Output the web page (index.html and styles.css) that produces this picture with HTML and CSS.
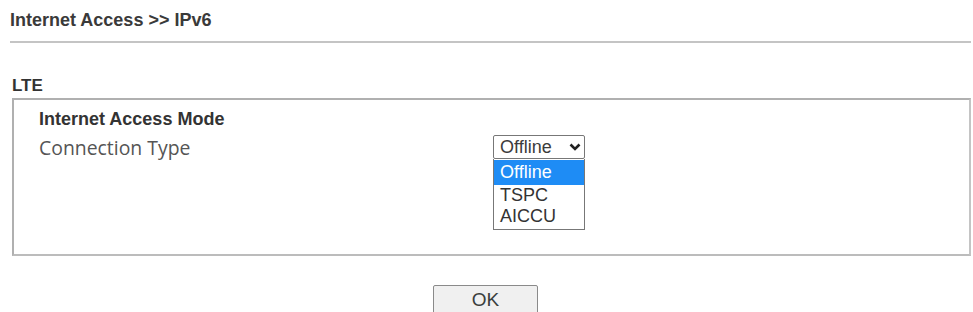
FILE: index.html
```html
<!DOCTYPE html>
<html>
<head>
<meta charset="utf-8">
<link rel="stylesheet" href="styles.css">
</head>
<body>
<div class="page">
  <div class="title">Internet Access &gt;&gt; IPv6</div>
  <div class="rule"></div>
  <div class="section">LTE</div>
  <div class="box">
    <div class="mode">Internet Access Mode</div>
    <div class="row">
      <div class="label">Connection Type</div>
      <div class="control">
        <div class="select">
          <span class="value">Offline</span>
          <svg class="chev" width="12" height="8" viewBox="0 0 12 8"><path d="M1.5 1.5 L6 6 L10.5 1.5" fill="none" stroke="#222" stroke-width="2.6"/></svg>
        </div>
        <div class="list">
          <div class="opt sel">Offline</div>
          <div class="opt">TSPC</div>
          <div class="opt">AICCU</div>
        </div>
      </div>
    </div>
  </div>
  <div class="actions">
    <button class="ok">OK</button>
  </div>
</div>
</body>
</html>
```

FILE: styles.css
```css
html, body {
  margin: 0;
  padding: 0;
  background: #fff;
}
.page {
  padding: 10px 2px 0 10px;
  font-family: "Liberation Sans", Arial, sans-serif;
  color: #333;
}
.title {
  font-weight: bold;
  font-size: 18px;
  line-height: 20px;
  color: #3a3a3a;
}
.rule {
  height: 2px;
  background: #c4c4c4;
  margin-top: 11px;
}
.section {
  font-weight: bold;
  font-size: 17px;
  line-height: 20px;
  margin-top: 33px;
  color: #333;
  padding-left: 2px;
}
.box {
  margin: 2px 0 0 2px;
  border: 2px solid #b0b0b0;
  border-right-color: #c4c4c4;
  border-bottom-color: #bcbcbc;
  height: 158px;
  box-sizing: border-box;
  padding: 8px 0 0 25px;
}
.mode {
  font-weight: bold;
  font-size: 18px;
  line-height: 22px;
  color: #333;
}
.row {
  display: flex;
  margin-top: 5px;
}
.label {
  font-family: "Open Sans", sans-serif;
  font-size: 19.4px;
  line-height: 26px;
  color: #555;
  width: 454px;
}
.control {
  position: relative;
}
.select {
  width: 92px;
  height: 24px;
  box-sizing: border-box;
  border: 1px solid #777;
  border-radius: 2px;
  display: flex;
  align-items: center;
  justify-content: space-between;
  padding: 0 3px 0 6px;
  font-size: 18px;
  color: #3c3c3c;
}
.chev {
  display: block;
}
.list {
  position: absolute;
  left: 0;
  top: 24px;
  width: 92px;
  box-sizing: border-box;
  border: 1px solid #777;
  border-top: none;
  background: #fff;
  font-size: 18px;
  color: #333;
  padding: 1px 0 2px;
}
.opt {
  height: 21px;
  line-height: 21px;
  padding-left: 6px;
}
.opt.sel {
  background: #1e8cf5;
  color: #fff;
  height: 25px;
  line-height: 25px;
}
.actions {
  display: flex;
  justify-content: center;
  margin-top: 29px;
  padding-right: 10px;
}
.ok {
  width: 105px;
  height: 30px;
  font-family: "Liberation Sans", Arial, sans-serif;
  font-size: 19px;
  color: #3a3f3d;
  background: #f0f0f0;
  border: 1px solid #8a8a8a;
  border-radius: 2px;
  padding: 0 0 1px;
}
```
